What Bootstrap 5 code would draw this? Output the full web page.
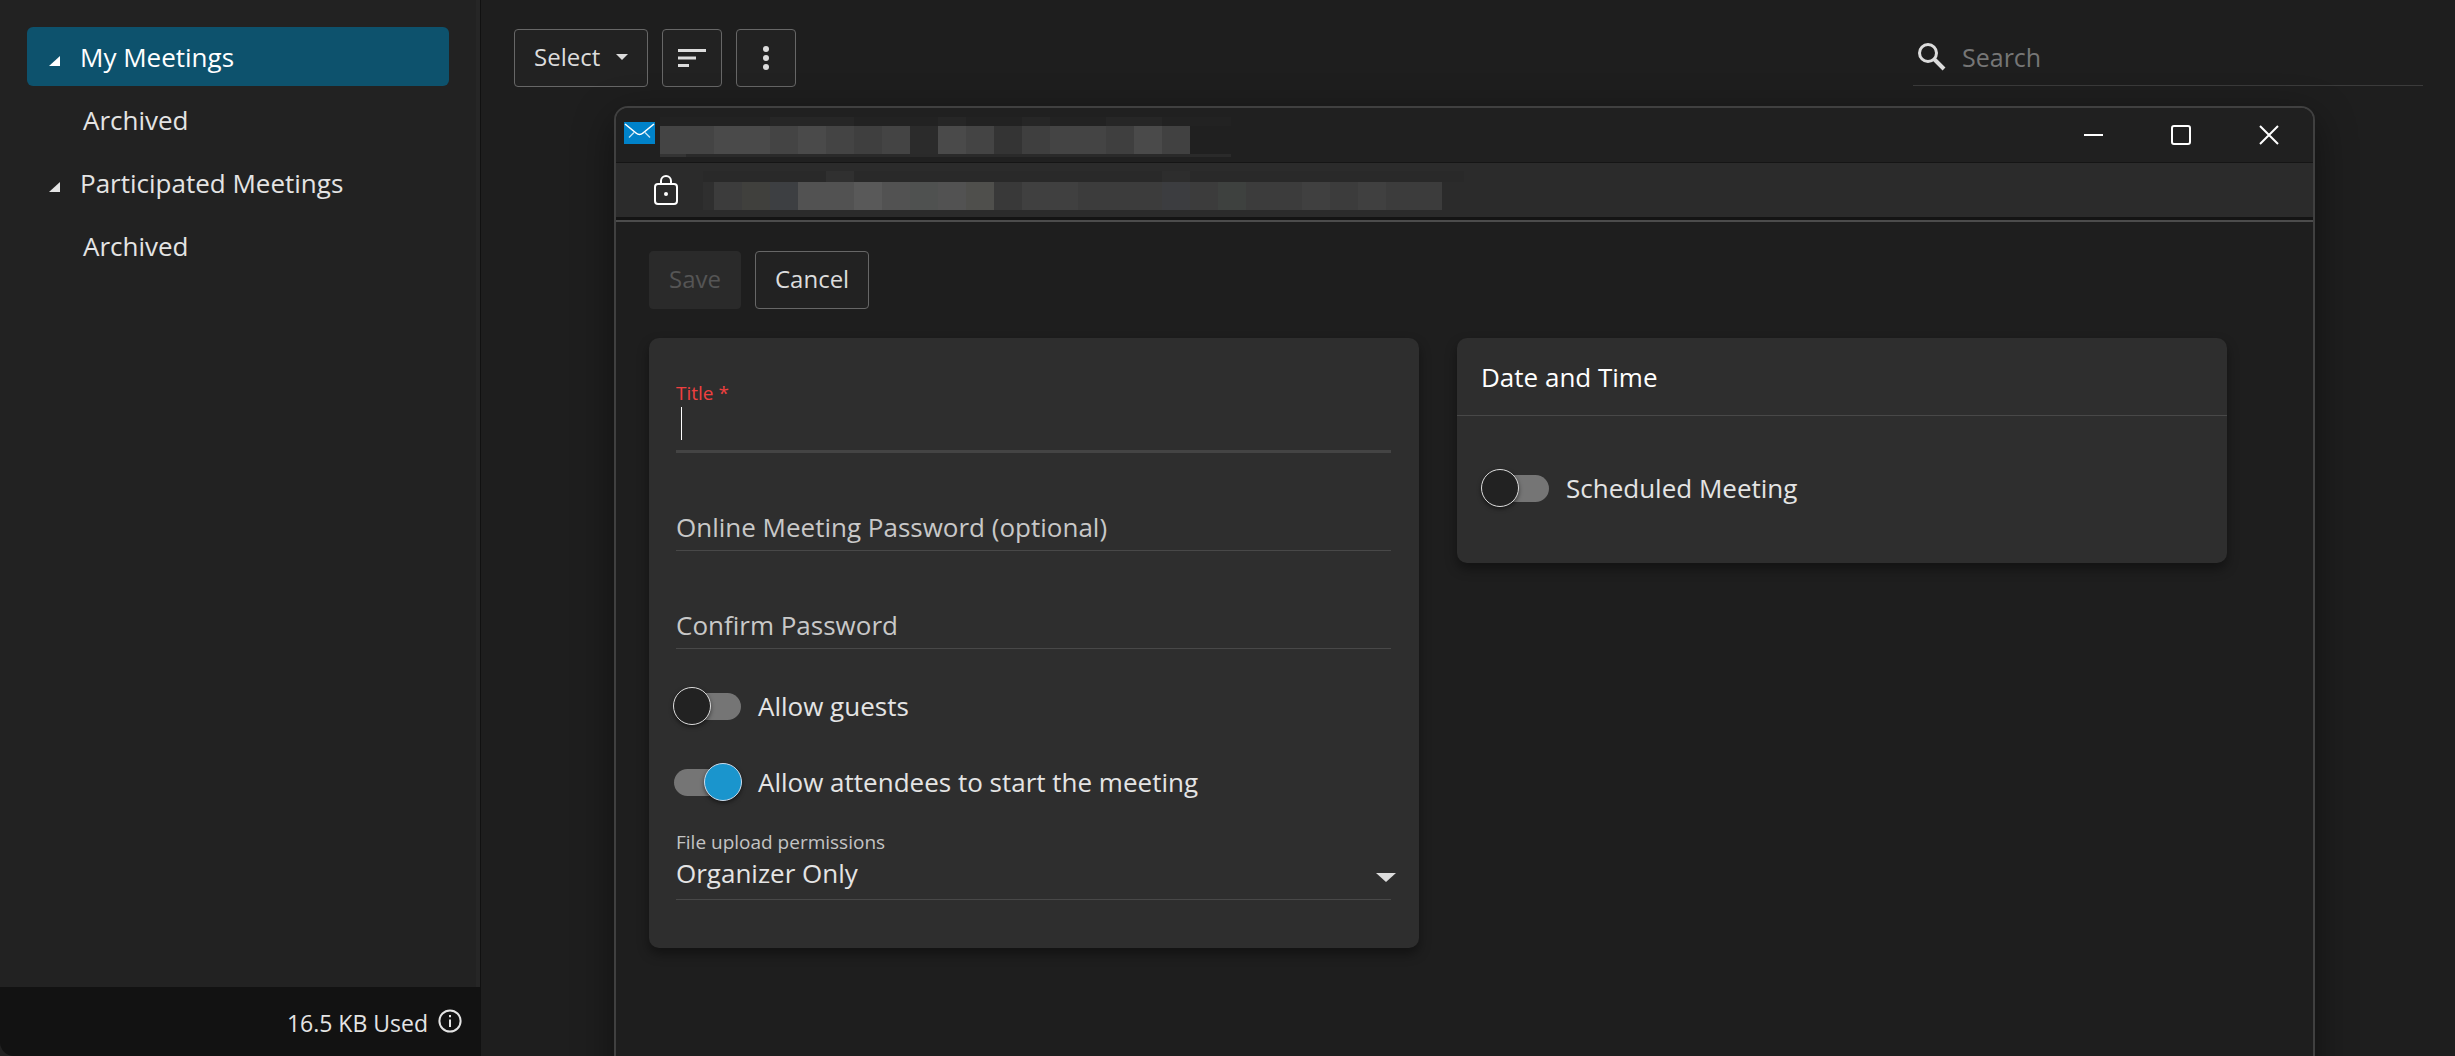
<!DOCTYPE html>
<html lang="en" data-bs-theme="dark">
<head>
<meta charset="utf-8">
<meta name="viewport" content="width=device-width, initial-scale=1">
<title>My Meetings</title>
<link href="https://cdn.jsdelivr.net/npm/bootstrap@5.3.0/dist/css/bootstrap.min.css" rel="stylesheet">
<style>
  body { background: #1e1e1e; color: #e4e4e4; font-family: "Open Sans", "Noto Sans", sans-serif; font-size: 26px; line-height: 34px; height: 100vh; overflow: hidden; }
  svg { display: block; flex: none; }

  /* Sidebar */
  .side-pane { flex: 0 0 481px; background: #222; border-right: 1px solid #111; box-shadow: inset -4px 0 #262626; }
  .tree-nav { padding: 27px 31px 0 27px; gap: 4px; }
  .tree-link { display: flex; align-items: center; height: 59px; padding: 0 0 0 22px; gap: 20px; border-radius: 6px; color: #e4e4e4; text-decoration: none; }
  .tree-link svg { margin-top: 8px; }
  .tree-link.active { background: #0d526d; color: #fff; }
  .tree-link.sub-item { padding-left: 56px; }
  .quota-bar { background: #121212; height: 69px; padding: 2px 18px 0 0; gap: 10px; font-size: 23px; border-bottom-left-radius: 14px; }
  .quota-bar svg { margin-bottom: 4px; }

  /* Toolbar */
  .btn-line { gap: 14px; }
  .tool-btn { --bs-btn-color: #dcdcdc; --bs-btn-bg: #222; --bs-btn-border-color: #676767; --bs-btn-hover-bg: #2c2c2c; --bs-btn-hover-color: #fff; --bs-btn-hover-border-color: #888; --bs-btn-border-radius: 4px; --bs-btn-font-size: 24px; --bs-btn-line-height: 34px; padding: 10px 19px 12px; height: 58px; white-space: nowrap; }
  .icon-btn { width: 60px; padding: 0; display: flex; align-items: center; justify-content: center; }
  .tool-strip { padding: 29px 32px 0 33px; }
  .find-box { width: 510px; height: 57px; border-bottom: 1px solid #3b3b3b; padding-left: 4px; gap: 15px; font-size: 25px; }
  .plain-input { background: transparent; border: 0; outline: 0; color: #e4e4e4; width: 100%; padding: 0; caret-color: #fff; }
  .find-box .plain-input::placeholder { color: #767676; opacity: 1; }

  /* Pop-up window over the list */
  .popup-win { position: absolute; top: 106px; left: 133px; right: 140px; bottom: -40px; border: 2px solid #404040; border-radius: 14px; background: #1e1e1e; box-shadow: 0 12px 40px rgba(0,0,0,.45); overflow: hidden; }
  .title-strip { height: 55px; background: #202020; border-bottom: 1px solid #151515; padding-left: 8px; }
  .title-strip .mail-mark { margin: 14px 5px 0 0; }
  .win-btn { width: 88px; height: 53px; background: none; border: 0; padding: 0; display: flex; align-items: center; justify-content: center; }
  .address-strip { height: 54px; background: #2b2b2b; padding-left: 38px; gap: 25px; }
  .strip-edge { height: 5px; background: #141414; border-bottom: 2px solid #4c4c4c; }

  /* Form */
  .form-area { padding: 29px 86px 0 33px; }
  .save-btn:disabled { --bs-btn-disabled-bg: #2a2a2a; --bs-btn-disabled-border-color: #2a2a2a; --bs-btn-disabled-color: #555; --bs-btn-disabled-opacity: 1; }
  .panel-grid { display: grid; grid-template-columns: 1fr 1fr; gap: 38px; margin-top: 29px; align-items: start; }
  .form-panel { background: #2e2e2e; border-radius: 10px; box-shadow: 0 6px 12px rgba(0,0,0,.4); }
  .main-panel { padding: 42px 28px 48px 27px; }
  .small-label { display: block; font-size: 19px; line-height: 26px; color: #c4c4c4; }
  .small-label.invalid { color: #f04040; }
  .title-input { display: block; height: 47px; padding: 0 0 12px 5px; border-bottom: 3px solid #444; background: linear-gradient(#fff, #fff) 5px 1px / 1px 33px no-repeat; }
  .line-input { display: block; height: 42px; padding-bottom: 5px; border-bottom: 1px solid #484848; margin-top: 56px; }
  .line-input::placeholder { color: #c8c8c8; opacity: 1; }
  .switch-row { display: flex; align-items: center; gap: 16px; height: 38px; }
  .slide-switch { appearance: none; flex: none; width: 69px; height: 38px; margin: 0; position: relative; }
  .slide-switch::before { content: ""; position: absolute; left: 1px; right: 1px; top: 6px; height: 27px; border-radius: 14px; background: #757575; }
  .slide-switch::after { content: ""; position: absolute; left: 0; top: 0; width: 38px; height: 38px; border-radius: 50%; background: #222; border: 1px solid #ddd; box-shadow: 0 2px 4px rgba(0,0,0,.5); }
  .slide-switch:checked::after { left: auto; right: 0; background: #1a95cd; border-color: #cde; }
  .main-panel .switch-row { margin: 38px 0 0 -3px; }
  .drop-label { margin-top: 28px; }
  .drop-field { appearance: none; background: transparent url("data:image/svg+xml,%3Csvg xmlns='http://www.w3.org/2000/svg' width='20' height='9'%3E%3Cpath d='M0 0h20l-10 9z' fill='%23dcdcdc'/%3E%3C/svg%3E") no-repeat right 18px; border: 0; outline: 0; width: calc(100% + 5px); height: 44px; padding: 0 0 8px; color: #e4e4e4; display: block; }
  .drop-wrap { border-bottom: 1px solid #484848; }
  .date-head { font-size: 26px; line-height: 34px; padding: 22px 24px 21px; border-bottom: 1px solid #484848; margin: 0; font-weight: 400; }
  .date-body { padding: 53px 24px 56px; }
</style>
</head>
<body class="d-flex">

<aside class="side-pane d-flex flex-column">
  <nav class="tree-nav d-flex flex-column flex-grow-1" aria-label="Folders">
    <a class="tree-link active" href="#"><svg width="11" height="10"><path d="M11 0v10H0z" fill="currentColor"/></svg>My Meetings</a>
    <a class="tree-link sub-item" href="#">Archived</a>
    <a class="tree-link" href="#"><svg width="11" height="10"><path d="M11 0v10H0z" fill="currentColor"/></svg>Participated Meetings</a>
    <a class="tree-link sub-item" href="#">Archived</a>
  </nav>
  <div class="quota-bar d-flex align-items-center justify-content-end">
    <span>16.5 KB Used</span>
    <svg width="24" height="24" viewBox="0 0 24 24"><circle cx="12" cy="12" r="10.6" fill="none" stroke="#e4e4e4" stroke-width="2"/><path d="M11 10.500h2V18h-2zM11 6h2v2.300h-2z" fill="#e4e4e4"/></svg>
  </div>
</aside>

<main class="flex-grow-1 position-relative">
  <div class="tool-strip d-flex justify-content-between">
    <div class="btn-line d-flex">
      <button class="btn tool-btn d-flex align-items-center" type="button">Select<svg class="ms-3" width="12" height="6"><path d="M0 0h12L6 6z" fill="currentColor"/></svg></button>
      <button class="btn tool-btn icon-btn" type="button" aria-label="Sort"><svg width="28" height="18"><path d="M0 0h28v3H0zM0 7.500h18v3H0zM0 15h11v3H0z" fill="currentColor"/></svg></button>
      <button class="btn tool-btn icon-btn" type="button" aria-label="More"><svg width="6" height="24"><g fill="currentColor"><circle cx="3" cy="3" r="3"/><circle cx="3" cy="12" r="3"/><circle cx="3" cy="21" r="3"/></g></svg></button>
    </div>
    <label class="find-box d-flex align-items-center">
      <svg width="30" height="30" viewBox="0 0 30 30" fill="none" stroke="#dcdcdc"><circle cx="11" cy="11" r="8.500" stroke-width="3"/><path d="M17 17l10 10" stroke-width="4"/></svg>
      <input class="plain-input" type="search" placeholder="Search" aria-label="Search">
    </label>
  </div>

  <section class="popup-win" role="dialog" aria-label="New meeting">
    <header class="title-strip d-flex">
      <svg class="mail-mark" width="31" height="22" viewBox="0 0 31 22"><path fill="#0082c9" d="M0 0h31v22H0z"/><g fill="none" stroke="#fff"><path d="M1 2l11 9q3.500 3 7 0l11-9" stroke-width="1.600"/><path d="M10 10.500l-5 5M21 10.500l5 5" stroke="#bfe2f5" stroke-width="1.400"/></g></svg>
      <svg width="571" height="54" shape-rendering="crispEdges" aria-hidden="true">
        <path fill="#222" d="M0 9h571v9H0z"/>
        <path fill="#262626" d="M110 9h28v9h-28zM138 9h56v9h-56zM278 9h28v9h-28zM362 9h28v9h-28zM446 9h56v9h-56z"/>
        <path fill="#2a2a2a" d="M0 46h571v3H0z"/><path fill="#343434" d="M0 46h26v3H0z"/>
        <path fill="#444" d="M0 18h250v28H0zM306 18h28v28h-28zM390 18h56v28h-56z"/>
        <path fill="#4a4a4a" d="M54 18h56v28H54zM138 18h28v28h-28zM278 18h28v28h-28zM474 18h28v28h-28z"/>
        <path fill="#3f3f3f" d="M194 18h28v28h-28zM362 18h28v28h-28zM446 18h28v28h-28z"/>
        <path fill="#414141" d="M502 18h28v28h-28z"/>
        <path fill="#2b2b2b" d="M250 18h28v28h-28z"/><path fill="#343434" d="M334 18h28v28h-28z"/>
      </svg>
      <div class="d-flex ms-auto">
        <button class="win-btn" type="button" aria-label="Minimize"><svg width="19" height="2"><path d="M0 0h19v2H0z" fill="#fff"/></svg></button>
        <button class="win-btn" type="button" aria-label="Maximize"><svg width="20" height="20"><rect x="1" y="1" width="18" height="18" rx="2" fill="none" stroke="#fff" stroke-width="2"/></svg></button>
        <button class="win-btn" type="button" aria-label="Close"><svg width="20" height="20"><path d="M1 1l18 18M19 1L1 19" stroke="#fff" stroke-width="2"/></svg></button>
      </div>
    </header>
    <div class="address-strip d-flex align-items-center">
      <svg width="24" height="30" viewBox="0 0 24 30" fill="none" stroke="#fff" stroke-width="2"><rect x="1" y="9" width="22" height="20" rx="3"/><path d="M7 9V6a5 5 0 0 1 10 0v3"/><circle cx="12" cy="19" r="2" fill="#fff" stroke="none"/></svg>
      <svg width="761" height="54" shape-rendering="crispEdges" aria-hidden="true">
        <path fill="#292929" d="M0 8h761v11H0z"/><path fill="#303030" d="M123 8h28v11h-28z"/><path fill="#2d2d2d" d="M459 8h28v11h-28z"/>
        <path fill="#2f2f2f" d="M0 19h11v28H0z"/>
        <path fill="#3c3c3c" d="M11 19h728v28H11z"/>
        <path fill="#40403d" d="M39 19h28v28H39z"/><path fill="#3d3f42" d="M67 19h28v28H67z"/>
        <path fill="#525252" d="M95 19h196v28H95z"/><path fill="#595959" d="M151 19h28v28h-28z"/>
        <path fill="#4f5150" d="M207 19h28v28h-28z"/><path fill="#4f4f4c" d="M263 19h28v28h-28z"/>
        <path fill="#393939" d="M291 19h28v28h-28z"/>
        <path fill="#404040" d="M319 19h56v28h-56zM599 19h28v28h-28zM655 19h28v28h-28z"/>
        <path fill="#3c3d40" d="M459 19h28v28h-28z"/><path fill="#3e413f" d="M515 19h28v28h-28z"/>
      </svg>
    </div>
    <div class="strip-edge"></div>

    <form class="form-area">
      <div class="btn-line d-flex">
        <button class="btn tool-btn save-btn" type="button" disabled>Save</button>
        <button class="btn tool-btn" type="button">Cancel</button>
      </div>
      <div class="panel-grid">
        <div class="form-panel main-panel">
          <label class="small-label invalid" for="mt-title">Title *</label>
          <input class="plain-input title-input" id="mt-title" type="text">
          <input class="plain-input line-input" type="password" placeholder="Online Meeting Password (optional)" aria-label="Online Meeting Password (optional)">
          <input class="plain-input line-input" type="password" placeholder="Confirm Password" aria-label="Confirm Password">
          <label class="switch-row"><input class="slide-switch" type="checkbox">Allow guests</label>
          <label class="switch-row"><input class="slide-switch" type="checkbox" checked>Allow attendees to start the meeting</label>
          <label class="small-label drop-label" for="mt-upload">File upload permissions</label>
          <div class="drop-wrap"><select class="drop-field" id="mt-upload"><option>Organizer Only</option></select></div>
        </div>
        <div class="form-panel">
          <h2 class="date-head">Date and Time</h2>
          <div class="date-body"><label class="switch-row"><input class="slide-switch" type="checkbox">Scheduled Meeting</label></div>
        </div>
      </div>
    </form>
  </section>
</main>

<script src="https://cdn.jsdelivr.net/npm/bootstrap@5.3.0/dist/js/bootstrap.bundle.min.js"></script>
</body>
</html>
